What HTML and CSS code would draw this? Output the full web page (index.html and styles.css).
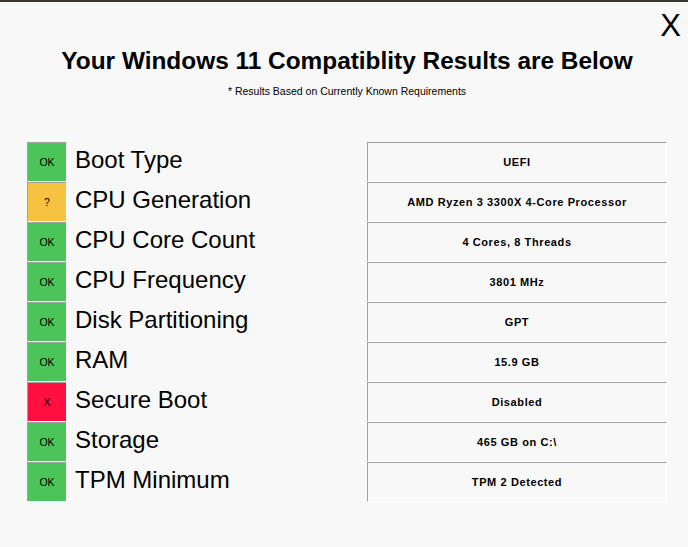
FILE: index.html
```html
<!DOCTYPE html>
<html>
<head>
<meta charset="utf-8">
<link rel="stylesheet" href="styles.css">
</head>
<body>
<div class="close-row"><span class="close">X</span></div>
<div class="header">
  <h1 class="title">Your Windows 11 Compatiblity Results are Below</h1>
  <p class="subtitle">* Results Based on Currently Known Requirements</p>
</div>
<div class="results">
  <div class="row"><div class="status ok">OK</div><div class="label">Boot Type</div><div class="value">UEFI</div></div>
  <div class="row"><div class="status warn">?</div><div class="label">CPU Generation</div><div class="value">AMD Ryzen 3 3300X 4-Core Processor</div></div>
  <div class="row"><div class="status ok">OK</div><div class="label">CPU Core Count</div><div class="value">4 Cores, 8 Threads</div></div>
  <div class="row"><div class="status ok">OK</div><div class="label">CPU Frequency</div><div class="value">3801 MHz</div></div>
  <div class="row"><div class="status ok">OK</div><div class="label">Disk Partitioning</div><div class="value">GPT</div></div>
  <div class="row"><div class="status ok">OK</div><div class="label">RAM</div><div class="value">15.9 GB</div></div>
  <div class="row"><div class="status fail">X</div><div class="label">Secure Boot</div><div class="value">Disabled</div></div>
  <div class="row"><div class="status ok">OK</div><div class="label">Storage</div><div class="value">465 GB on C:\</div></div>
  <div class="row"><div class="status ok">OK</div><div class="label">TPM Minimum</div><div class="value">TPM 2 Detected</div></div>
</div>
</body>
</html>
```
FILE: styles.css
```css
html, body {
  margin: 0;
  padding: 0;
}
body {
  background: #f8f8f8;
  border-top: 2px solid #3c3834;
  font-family: "Liberation Sans", Arial, sans-serif;
  color: #000;
  height: 545px;
  overflow: hidden;
}
.close-row {
  display: flex;
  justify-content: flex-end;
  height: 36px;
  padding-top: 6px;
  padding-right: 7px;
}
.close {
  font-size: 31px;
  line-height: 36px;
}
.header {
  padding-left: 6px;
  text-align: center;
}
.title {
  margin: 3px 0 0;
  font-size: 24.4px;
  line-height: 28px;
  font-weight: bold;
}
.subtitle {
  margin: 10px 0 0;
  font-size: 10.5px;
  line-height: 12px;
}
.results {
  margin-top: 45px;
  padding-left: 27px;
  display: flex;
  flex-direction: column;
}
.row {
  display: grid;
  grid-template-columns: 40px 300px 300px;
  height: 40px;
}
.status, .value {
  box-sizing: border-box;
  border-top: 1px solid #a0a0a0;
  border-left: 1px solid #a0a0a0;
  border-bottom: 1px solid #ffffff;
  border-right: 1px solid #ffffff;
  display: flex;
  align-items: center;
  justify-content: center;
}
.status {
  font-size: 10.5px;
}
.ok { background: #4bc55a; }
.warn { background: #f5c242; }
.fail { background: #ff1040; }
.label {
  padding-left: 8px;
  font-size: 24px;
  line-height: 36px;
}
.value {
  font-size: 11px;
  font-weight: bold;
  letter-spacing: 0.6px;
}
```
